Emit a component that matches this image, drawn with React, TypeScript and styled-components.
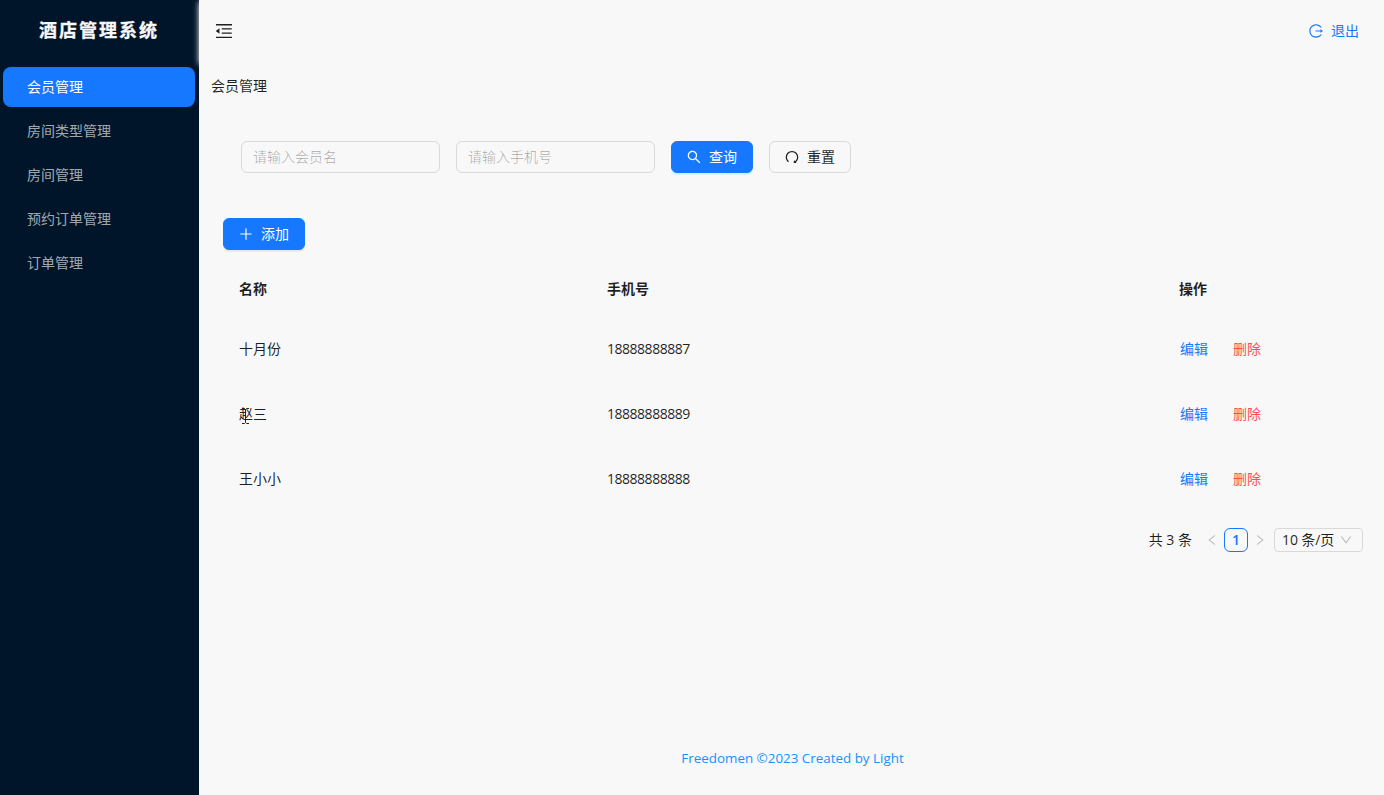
import styled, { createGlobalStyle } from "styled-components";
import {
  AiOutlineDown,
  AiOutlineLeft,
  AiOutlineLogout,
  AiOutlineMenuFold,
  AiOutlinePlus,
  AiOutlineRedo,
  AiOutlineRight,
  AiOutlineSearch,
} from "react-icons/ai";

// trims the empty margin that the icons carry in their 1024 box
const iconBox = "64 64 896 896";

const menus = ["会员管理", "房间类型管理", "房间管理", "预约订单管理", "订单管理"];

const members = [
  { name: "十月份", phone: "18888888887" },
  { name: "赵三", phone: "18888888889" },
  { name: "王小小", phone: "18888888888" },
];

const GlobalStyle = createGlobalStyle`
  * {
    box-sizing: border-box;
  }

  body {
    margin: 0;
    font-family: "Open Sans", "Noto Sans CJK SC", sans-serif;
    font-size: 14px;
    line-height: 22px;
    color: rgba(0, 0, 0, 0.88);
    background-color: #f8f8f8;
  }

  button,
  input {
    font-family: inherit;
    font-size: inherit;
  }

  svg {
    display: block;
    flex: none;
  }
`;

const Layout = styled.div`
  display: flex;
  height: 795px;
  overflow: hidden;
`;

const Sider = styled.aside`
  width: 199px;
  flex: none;
  background-color: #001529;
`;

const Logo = styled.h1`
  margin: 0;
  height: 63px;
  padding-right: 1px;
  font-size: 18px;
  font-weight: 700;
  letter-spacing: 2px;
  line-height: 60px;
  text-align: center;
  color: #f8f8f8;
  -webkit-text-stroke: 0.3px #f8f8f8;
`;

const Menu = styled.ul`
  margin: 0;
  padding: 4px 4px 0 3px;
  list-style: none;
`;

const MenuItem = styled.li<{ $active: boolean }>`
  height: 40px;
  margin-bottom: 4px;
  padding-left: 24px;
  line-height: 40px;
  border-radius: 8px;
  color: ${({ $active }) => ($active ? "#fff" : "rgba(255, 255, 255, 0.65)")};
  background-color: ${({ $active }) => ($active ? "#1677ff" : "transparent")};
`;

const Main = styled.div`
  display: flex;
  flex: 1;
  flex-direction: column;
`;

const Header = styled.header`
  display: flex;
  align-items: center;
  justify-content: space-between;
  height: 62px;
  padding: 0 25px 0 16px;
  background-color: #f8f8f8;
  box-shadow: 0 2px 6px #f8f8f8;
`;

const Logout = styled.a`
  display: flex;
  align-items: center;
  gap: 8px;
  color: #1677ff;
`;

const Content = styled.main`
  flex: 1;
  padding: 13px 21px 0 12px;
`;

const SearchForm = styled.form`
  display: flex;
  gap: 16px;
  padding: 44px 0 45px 30px;
`;

const Input = styled.input`
  width: 199px;
  height: 32px;
  padding: 0 11px 2px;
  border: 1px solid #d9d9d9;
  border-radius: 6px;
  background-color: transparent;

  &::placeholder {
    font-weight: 300;
    color: rgba(0, 0, 0, 0.35);
  }
`;

const Button = styled.button<{ $primary?: boolean }>`
  display: flex;
  align-items: center;
  justify-content: center;
  gap: 8px;
  width: 82px;
  height: 32px;
  padding: 0;
  border: 1px solid ${({ $primary }) => ($primary ? "#1677ff" : "#d9d9d9")};
  border-radius: 6px;
  color: ${({ $primary }) => ($primary ? "#fff" : "rgba(0, 0, 0, 0.88)")};
  background-color: ${({ $primary }) => ($primary ? "#1677ff" : "transparent")};
  box-shadow: ${({ $primary }) => ($primary ? "0 2px 0 rgba(5, 145, 255, 0.1)" : "none")};
`;

const ButtonText = styled.span`
  padding-bottom: 2px;
`;

const TableArea = styled.section`
  padding-left: 12px;
`;

const Table = styled.table`
  width: 100%;
  margin-top: 12px;
  table-layout: fixed;
  border-collapse: collapse;

  th,
  td {
    padding: 0 16px 2px;
    text-align: left;
  }

  th {
    height: 55px;
    font-weight: 600;
  }

  td {
    height: 65px;
  }
`;

const NameCell = styled.td`
  position: relative;
`;

const Phone = styled.span`
  letter-spacing: -0.48px;
`;

const TextCursor = styled.svg`
  position: absolute;
  top: 26px;
  left: 18px;
`;

const Actions = styled.div`
  display: flex;
  gap: 25px;
  padding-left: 1px;
`;

const ActionLink = styled.a<{ $danger?: boolean }>`
  color: ${({ $danger }) => ($danger ? "#ff4d4f" : "#1677ff")};
`;

const Pagination = styled.div`
  display: flex;
  align-items: center;
  justify-content: flex-end;
  height: 24px;
  margin-top: 16px;
`;

const Total = styled.span`
  margin-right: 8px;
`;

const PageArrow = styled.span`
  display: flex;
  align-items: center;
  justify-content: center;
  width: 24px;
  color: rgba(0, 0, 0, 0.25);
`;

const PageNumber = styled.span`
  width: 24px;
  height: 24px;
  line-height: 22px;
  text-align: center;
  border: 1px solid #1677ff;
  border-radius: 6px;
  font-weight: 600;
  color: #1677ff;
`;

const PageSize = styled.div`
  display: flex;
  align-items: center;
  justify-content: space-between;
  width: 89px;
  height: 24px;
  margin-left: 2px;
  padding: 0 10px 0 7px;
  border: 1px solid #d9d9d9;
  border-radius: 4px;
  letter-spacing: -0.1px;

  svg {
    color: rgba(0, 0, 0, 0.25);
  }
`;

const Footer = styled.footer`
  height: 48px;
  padding-left: 2px;
  text-align: center;
  font-size: 13.4px;
  color: #1890ff;
`;

const App = () => {
  return (
    <>
      <GlobalStyle />
      <Layout>
        <Sider>
          <Logo>酒店管理系统</Logo>
          <Menu>
            {menus.map((menu, index) => (
              <MenuItem key={menu} $active={index === 0}>
                {menu}
              </MenuItem>
            ))}
          </Menu>
        </Sider>
        <Main>
          <Header>
            <AiOutlineMenuFold size={18} viewBox={iconBox} />
            <Logout>
              <AiOutlineLogout size={14} viewBox={iconBox} />
              退出
            </Logout>
          </Header>
          <Content>
            <div>会员管理</div>
            <SearchForm>
              <Input placeholder="请输入会员名" />
              <Input placeholder="请输入手机号" />
              <Button type="button" $primary>
                <AiOutlineSearch size={14} viewBox={iconBox} />
                <ButtonText>查询</ButtonText>
              </Button>
              <Button type="button">
                <AiOutlineRedo size={14} viewBox={iconBox} />
                <ButtonText>重置</ButtonText>
              </Button>
            </SearchForm>
            <TableArea>
              <Button type="button" $primary>
                <AiOutlinePlus size={14} viewBox={iconBox} />
                <ButtonText>添加</ButtonText>
              </Button>
              <Table>
                <colgroup>
                  <col width="368" />
                  <col width="572" />
                  <col />
                </colgroup>
                <thead>
                  <tr>
                    <th>名称</th>
                    <th>手机号</th>
                    <th>操作</th>
                  </tr>
                </thead>
                <tbody>
                  {members.map((member, index) => (
                    <tr key={member.phone}>
                      <NameCell>
                        {member.name}
                        {index === 1 && (
                          <TextCursor width="9" height="16" viewBox="0 0 9 16">
                            <path d="M1 .5h2.5l1 1 1-1H8M4.5 1.5v13M1 15.5h2.5l1-1 1 1H8" fill="none" stroke="#222" />
                          </TextCursor>
                        )}
                      </NameCell>
                      <td>
                        <Phone>{member.phone}</Phone>
                      </td>
                      <td>
                        <Actions>
                          <ActionLink>编辑</ActionLink>
                          <ActionLink $danger>删除</ActionLink>
                        </Actions>
                      </td>
                    </tr>
                  ))}
                </tbody>
              </Table>
              <Pagination>
                <Total>共 3 条</Total>
                <PageArrow>
                  <AiOutlineLeft size={12} viewBox={iconBox} />
                </PageArrow>
                <PageNumber>1</PageNumber>
                <PageArrow>
                  <AiOutlineRight size={12} viewBox={iconBox} />
                </PageArrow>
                <PageSize>
                  10 条/页
                  <AiOutlineDown size={12} viewBox={iconBox} />
                </PageSize>
              </Pagination>
            </TableArea>
          </Content>
          <Footer>Freedomen ©2023 Created by Light</Footer>
        </Main>
      </Layout>
    </>
  );
};

export default App;
